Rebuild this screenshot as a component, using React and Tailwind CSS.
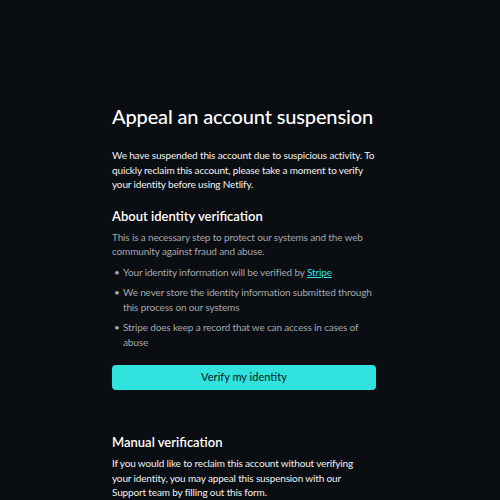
export default function App() {
  return (
    <div
      className="min-h-[500px] w-full bg-[#0a0d12] text-white"
      style={{ fontFamily: 'Lato, "Noto Sans", sans-serif' }}
    >
      <main className="pl-[112px] pt-[104px] w-[376px]">
        <h1 className="text-[20px] leading-[24px] tracking-[-0.15px] font-medium text-white">Appeal an account suspension</h1>

        <p className="mt-[20px] text-[10px] leading-[14.5px] tracking-[-0.15px] text-[#f1f2f3]">
          We have suspended this account due to suspicious activity. To quickly reclaim this account, please take a
          moment to verify your identity before using Netlify.
        </p>

        <h2 className="mt-[15px] text-[13px] leading-[18px] font-semibold text-white">About identity verification</h2>
        <div className="text-[10px] leading-[14.5px] tracking-[-0.15px] text-[#a3a8ae]">
          <p className="mt-[5px]">
            This is a necessary step to protect our systems and the web community against fraud and abuse.
          </p>
          <ul className="mt-[6px] flex flex-col gap-[6px]">
            <li className="flex">
              <span className="w-[11px] shrink-0 pl-[2px]">•</span>
              <span>
                Your identity information will be verified by{" "}
                <a href="#" className="text-[#32e6e2] underline">Stripe</a>
              </span>
            </li>
            <li className="flex">
              <span className="w-[11px] shrink-0 pl-[2px]">•</span>
              <span>We never store the identity information submitted through this process on our systems</span>
            </li>
            <li className="flex">
              <span className="w-[11px] shrink-0 pl-[2px]">•</span>
              <span>Stripe does keep a record that we can access in cases of abuse</span>
            </li>
          </ul>
        </div>

        <button className="mt-[16px] w-full h-[25px] rounded-[4px] bg-[#30e3de] text-[#0a2a2c] text-[11px] font-medium">
          Verify my identity
        </button>

        <h2 className="mt-[43px] text-[13px] leading-[18px] font-semibold text-white">Manual verification</h2>
        <p className="mt-[5px] max-w-[252px] text-[10px] leading-[14.5px] tracking-[-0.15px] text-[#f1f2f3]">
          If you would like to reclaim this account without verifying your identity, you may appeal this suspension
          with our Support team by filling out this form.
        </p>
      </main>
    </div>
  );
}
